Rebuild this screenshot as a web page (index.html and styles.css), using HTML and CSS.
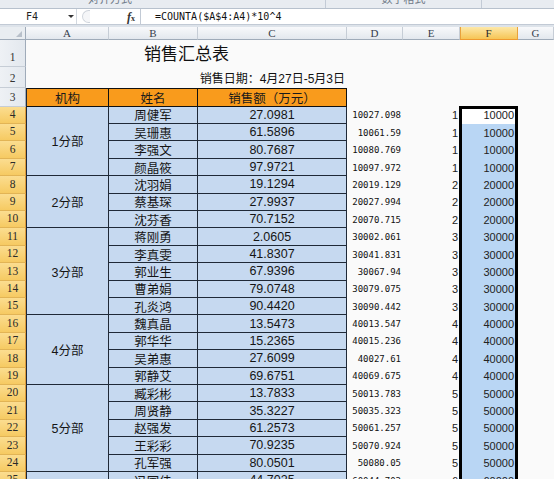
FILE: index.html
```html
<!DOCTYPE html>
<html lang="zh-CN">
<head>
<meta charset="utf-8">
<title>销售汇总表</title>
<link rel="stylesheet" href="styles.css">
</head>
<body>
<div class="top">
  <div class="ribbon">
    <div class="rgroup g1"><span>对齐方式</span></div>
    <div class="rgroup g2"></div>
    <div class="rgroup g3"><span>数字格式</span></div>
    <div class="rgroup g4"></div>
  </div>
  <div class="fbar">
    <div class="namebox"><span>F4</span><span class="dd"></span></div>
    <div class="fmid"><span class="knob"></span><span class="fx"><i>f</i><small>x</small></span></div>
    <div class="finput">=COUNTA($A$4:A4)*10^4</div>
  </div>
</div>
<div class="sheet">
  <div class="corner"><svg width="8" height="8" viewBox="0 0 8 8"><path d="M7 1 L7 7 L1 7 Z" fill="#b8c0ca"/></svg></div>
  <div class="ch">A</div><div class="ch">B</div><div class="ch">C</div><div class="ch">D</div><div class="ch">E</div><div class="ch on">F</div><div class="ch">G</div>

  <div class="rh">1</div><div class="c title">销售汇总表</div>
  <div class="rh">2</div><div class="c sub">销售日期：4月27日-5月3日</div>
  <div class="rh">3</div><div class="c t hd ca">机构</div><div class="c t hd cb">姓名</div><div class="c t hd cc">销售额（万元）</div>

  <div class="rh on">4</div><div class="c t ca s4">1分部</div><div class="c t cb">周健军</div><div class="c t cc">27.0981</div><div class="c cd">10027.098</div><div class="c ce">1</div><div class="c cf act">10000<span class="selbox"></span></div>
  <div class="rh on">5</div><div class="c t cb">吴珊惠</div><div class="c t cc">61.5896</div><div class="c cd">10061.59</div><div class="c ce">1</div><div class="c cf">10000</div>
  <div class="rh on">6</div><div class="c t cb">李强文</div><div class="c t cc">80.7687</div><div class="c cd">10080.769</div><div class="c ce">1</div><div class="c cf">10000</div>
  <div class="rh on">7</div><div class="c t cb">颜晶筱</div><div class="c t cc">97.9721</div><div class="c cd">10097.972</div><div class="c ce">1</div><div class="c cf">10000</div>

  <div class="rh on">8</div><div class="c t ca s3">2分部</div><div class="c t cb">沈羽娟</div><div class="c t cc">19.1294</div><div class="c cd">20019.129</div><div class="c ce">2</div><div class="c cf">20000</div>
  <div class="rh on">9</div><div class="c t cb">蔡基琛</div><div class="c t cc">27.9937</div><div class="c cd">20027.994</div><div class="c ce">2</div><div class="c cf">20000</div>
  <div class="rh on">10</div><div class="c t cb">沈芬香</div><div class="c t cc">70.7152</div><div class="c cd">20070.715</div><div class="c ce">2</div><div class="c cf">20000</div>

  <div class="rh on">11</div><div class="c t ca s5">3分部</div><div class="c t cb">蒋刚勇</div><div class="c t cc">2.0605</div><div class="c cd">30002.061</div><div class="c ce">3</div><div class="c cf">30000</div>
  <div class="rh on">12</div><div class="c t cb">李真雯</div><div class="c t cc">41.8307</div><div class="c cd">30041.831</div><div class="c ce">3</div><div class="c cf">30000</div>
  <div class="rh on">13</div><div class="c t cb">郭业生</div><div class="c t cc">67.9396</div><div class="c cd">30067.94</div><div class="c ce">3</div><div class="c cf">30000</div>
  <div class="rh on">14</div><div class="c t cb">曹弟娟</div><div class="c t cc">79.0748</div><div class="c cd">30079.075</div><div class="c ce">3</div><div class="c cf">30000</div>
  <div class="rh on">15</div><div class="c t cb">孔炎鸿</div><div class="c t cc">90.4420</div><div class="c cd">30090.442</div><div class="c ce">3</div><div class="c cf">30000</div>

  <div class="rh on">16</div><div class="c t ca s4">4分部</div><div class="c t cb">魏真晶</div><div class="c t cc">13.5473</div><div class="c cd">40013.547</div><div class="c ce">4</div><div class="c cf">40000</div>
  <div class="rh on">17</div><div class="c t cb">郭华华</div><div class="c t cc">15.2365</div><div class="c cd">40015.236</div><div class="c ce">4</div><div class="c cf">40000</div>
  <div class="rh on">18</div><div class="c t cb">吴弟惠</div><div class="c t cc">27.6099</div><div class="c cd">40027.61</div><div class="c ce">4</div><div class="c cf">40000</div>
  <div class="rh on">19</div><div class="c t cb">郭静艾</div><div class="c t cc">69.6751</div><div class="c cd">40069.675</div><div class="c ce">4</div><div class="c cf">40000</div>

  <div class="rh on">20</div><div class="c t ca s5">5分部</div><div class="c t cb">臧彩彬</div><div class="c t cc">13.7833</div><div class="c cd">50013.783</div><div class="c ce">5</div><div class="c cf">50000</div>
  <div class="rh on">21</div><div class="c t cb">周贤静</div><div class="c t cc">35.3227</div><div class="c cd">50035.323</div><div class="c ce">5</div><div class="c cf">50000</div>
  <div class="rh on">22</div><div class="c t cb">赵强发</div><div class="c t cc">61.2573</div><div class="c cd">50061.257</div><div class="c ce">5</div><div class="c cf">50000</div>
  <div class="rh on">23</div><div class="c t cb">王彩彩</div><div class="c t cc">70.9235</div><div class="c cd">50070.924</div><div class="c ce">5</div><div class="c cf">50000</div>
  <div class="rh on">24</div><div class="c t cb">孔军强</div><div class="c t cc">80.0501</div><div class="c cd">50080.05</div><div class="c ce">5</div><div class="c cf">50000</div>

  <div class="rh on">25</div><div class="c t ca s3">6分部</div><div class="c t cb">冯国佳</div><div class="c t cc">44.7025</div><div class="c cd">60044.703</div><div class="c ce">6</div><div class="c cf">60000</div>
</div>
</body>
</html>
```

FILE: styles.css
```css
* { box-sizing: border-box; }
html, body { margin: 0; padding: 0; overflow: hidden; }
body {
  width: 554px;
  height: 479px;
  background: #fafafa;
  font-family: "Liberation Sans", "Noto Sans CJK SC", sans-serif;
  color: #1a1a1a;
}

/* top chrome */
.top { background: #dde3ea; padding-bottom: 2px; }
.ribbon {
  height: 9px;
  display: flex;
  background: #e8ecf1;
  border-bottom: 1px solid #b7c1cd;
  overflow: hidden;
}
.rgroup {
  display: flex;
  justify-content: center;
  align-items: flex-end;
  padding-bottom: 3px;
  font-size: 11px;
  line-height: 12px;
  color: #6f7a88;
  white-space: nowrap;
}
.g1 { width: 220px; }
.g2 { width: 106px; border-right: 1px solid #c3cbd6; }
.g3 { width: 156px; border-right: 1px solid #c3cbd6; }
.g4 { flex: 1; }

.fbar {
  height: 16px;
  display: flex;
  background: #fff;
  border-bottom: 1px solid #c2cad5;
}
.namebox {
  width: 77px;
  display: flex;
  align-items: center;
  padding-left: 26px;
  padding-right: 2px;
  border-right: 1px solid #d3d9e0;
  font: 10px "DejaVu Sans Mono", monospace;
  color: #222;
}
.dd {
  margin-left: auto;
  width: 0;
  height: 0;
  border-left: 3px solid transparent;
  border-right: 3px solid transparent;
  border-top: 3px solid #333;
}
.fmid {
  width: 63px;
  display: flex;
  align-items: center;
}
.knob {
  margin-left: 5px;
  width: 8px;
  height: 13px;
  border: 1px solid #d0d5dc;
  border-right: none;
  border-radius: 7px 0 0 7px;
  background: #f5f6f8;
}
.fx {
  margin-left: 37px;
  font-family: "Liberation Serif", serif;
  font-weight: bold;
  font-size: 12px;
  color: #333;
  line-height: 1;
}
.fx small { font-size: 8px; }
.finput {
  flex: 1;
  display: flex;
  align-items: center;
  padding-left: 14px;
  border-left: 1px solid #c2cad5;
  font: 10px "DejaVu Sans Mono", monospace;
  color: #111;
  white-space: nowrap;
}

/* sheet */
.sheet {
  display: grid;
  grid-template-columns: 26px 83px 89px 149px 56px 57px 58px 36px;
  grid-template-rows: 13px 27px 21px 18.7px repeat(24, 17.4px);
}
.corner {
  background: #e9edf1;
  border-right: 1px solid #9fabb9;
  border-bottom: 1px solid #9fabb9;
  display: flex;
  justify-content: flex-end;
  align-items: flex-end;
  padding: 0 2px 1px 0;
}
.corner svg { display: block; }
.ch {
  background: linear-gradient(#f8f9fb, #e3e8ee);
  border-right: 1px solid #c6cdd6;
  border-bottom: 1px solid #9fabb9;
  font: 11px "Liberation Serif", serif;
  color: #36404c;
  display: flex;
  align-items: center;
  justify-content: center;
  line-height: 1;
}
.ch.on {
  background: linear-gradient(#fde8a8, #f6c555);
  border-right-color: #e9a23c;
  border-bottom-color: #ef9a2e;
  box-shadow: inset 1px 0 #e9a23c;
  color: #2a2a2a;
}
.rh {
  grid-column: 1;
  background: linear-gradient(90deg, #eef1f5, #e3e8ee);
  border-right: 1px solid #9fabb9;
  border-bottom: 1px solid #c6cdd6;
  font: 11.5px "Liberation Serif", serif;
  color: #333;
  display: flex;
  justify-content: center;
  align-items: flex-end;
  padding-bottom: 3px;
  line-height: 11px;
}
.rh.on {
  background: linear-gradient(#fbdd90, #f6ca62);
  border-bottom-color: #e2b455;
  border-right-color: #dc9a3a;
  color: #2a2a2a;
}

.c {
  display: flex;
  align-items: center;
  justify-content: center;
  font-size: 12.5px;
  white-space: nowrap;
  overflow: hidden;
}
.title {
  grid-column: 2 / 5;
  font-size: 17px;
  padding-bottom: 3px;
  color: #111;
}
.sub {
  grid-column: 2 / 5;
  justify-content: flex-end;
  padding-right: 2px;
  font-size: 12px;
  color: #111;
}
.t {
  background: #c6d9f0;
  border-right: 1px solid #1f2937;
  border-bottom: 1px solid #1f2937;
  color: #151515;
}
.ca { grid-column: 2; border-left: 1px solid #1f2937; }
.cb { grid-column: 3; }
.cc { grid-column: 4; }
.s3 { grid-row: span 3; }
.s4 { grid-row: span 4; }
.s5 { grid-row: span 5; }
.hd {
  background: #f99b1c;
  border-top: 1px solid #111;
  border-right-color: #111;
  border-bottom-color: #111;
  color: #1a1a1a;
}
.cd {
  grid-column: 5;
  justify-content: flex-end;
  padding-right: 2px;
  font: 9px "DejaVu Sans Mono", monospace;
  color: #111;
}
.ce {
  grid-column: 6;
  justify-content: flex-end;
  padding-right: 2px;
  font-size: 11px;
  color: #222;
}
.cf {
  grid-column: 7;
  justify-content: flex-end;
  padding-right: 4px;
  font-size: 11px;
  color: #222;
  background: #b9d6f4;
  overflow: visible;
}
.cf.act { background: #fff; position: relative; }
.selbox {
  position: absolute;
  left: -1px;
  top: -1px;
  right: 0;
  height: 400px;
  border: 3px solid #000;
  z-index: 2;
  pointer-events: none;
}
```
